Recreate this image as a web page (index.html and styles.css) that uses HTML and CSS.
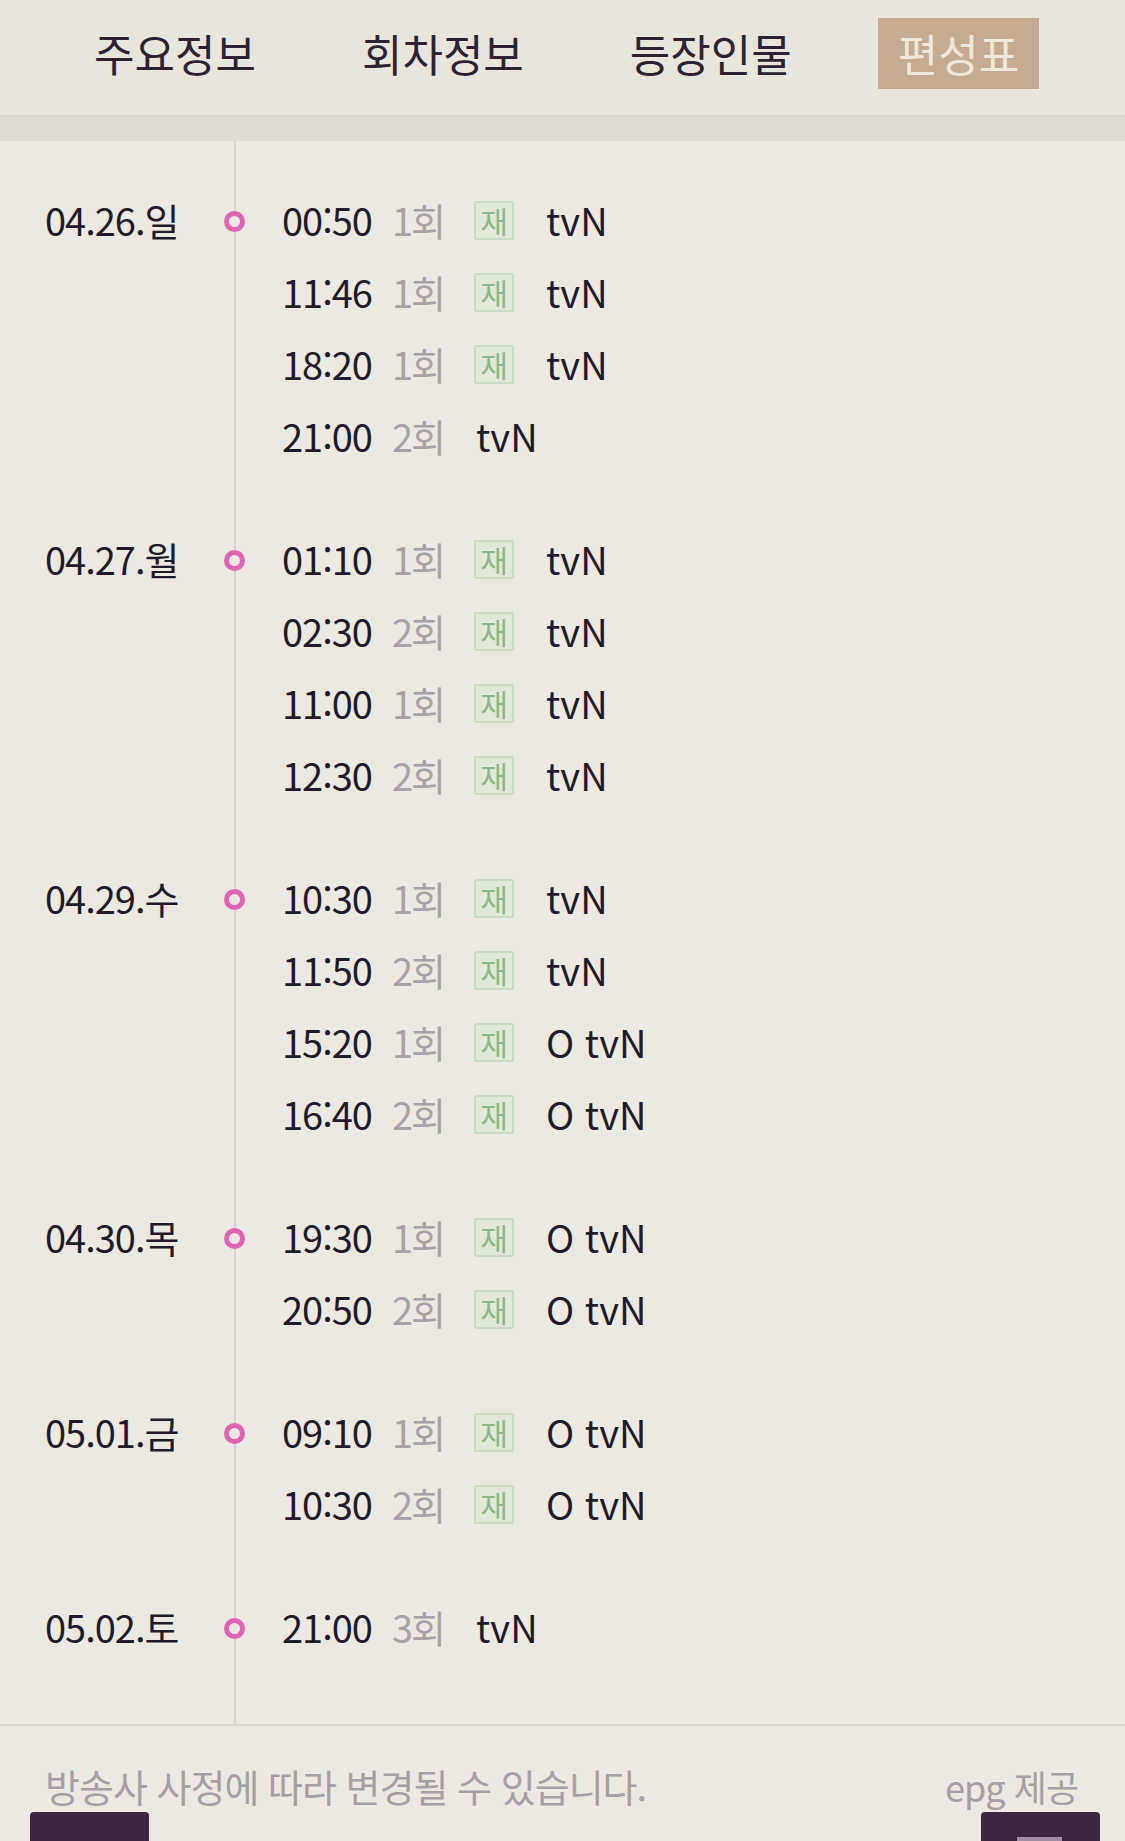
FILE: index.html
```html
<!DOCTYPE html>
<html lang="ko">
<head>
    <meta charset="UTF-8">
    <meta name="viewport" content="width=device-width, initial-scale=1.0">
    <title>편성표</title>
    <link rel="stylesheet" href="styles.css">
</head>
<body>
    <!-- Top tabs -->
    <nav class="tabs">
        <a class="tab">주요정보</a>
        <a class="tab">회차정보</a>
        <a class="tab">등장인물</a>
        <a class="tab active">편성표</a>
    </nav>
    <div class="band"></div>

    <!-- Schedule list -->
    <div class="schedule">
        <div class="day">
            <div class="day-date"><span>04.26.일</span><i class="dot"></i></div>
            <div class="day-times">
                <div class="slot"><span class="time">00:50</span><span class="ep">1회</span><span class="re">재</span><span class="ch">tvN</span></div>
                <div class="slot"><span class="time">11:46</span><span class="ep">1회</span><span class="re">재</span><span class="ch">tvN</span></div>
                <div class="slot"><span class="time">18:20</span><span class="ep">1회</span><span class="re">재</span><span class="ch">tvN</span></div>
                <div class="slot"><span class="time">21:00</span><span class="ep">2회</span><span class="ch">tvN</span></div>
            </div>
        </div>
        <div class="day">
            <div class="day-date"><span>04.27.월</span><i class="dot"></i></div>
            <div class="day-times">
                <div class="slot"><span class="time">01:10</span><span class="ep">1회</span><span class="re">재</span><span class="ch">tvN</span></div>
                <div class="slot"><span class="time">02:30</span><span class="ep">2회</span><span class="re">재</span><span class="ch">tvN</span></div>
                <div class="slot"><span class="time">11:00</span><span class="ep">1회</span><span class="re">재</span><span class="ch">tvN</span></div>
                <div class="slot"><span class="time">12:30</span><span class="ep">2회</span><span class="re">재</span><span class="ch">tvN</span></div>
            </div>
        </div>
        <div class="day">
            <div class="day-date"><span>04.29.수</span><i class="dot"></i></div>
            <div class="day-times">
                <div class="slot"><span class="time">10:30</span><span class="ep">1회</span><span class="re">재</span><span class="ch">tvN</span></div>
                <div class="slot"><span class="time">11:50</span><span class="ep">2회</span><span class="re">재</span><span class="ch">tvN</span></div>
                <div class="slot"><span class="time">15:20</span><span class="ep">1회</span><span class="re">재</span><span class="ch">O tvN</span></div>
                <div class="slot"><span class="time">16:40</span><span class="ep">2회</span><span class="re">재</span><span class="ch">O tvN</span></div>
            </div>
        </div>
        <div class="day">
            <div class="day-date"><span>04.30.목</span><i class="dot"></i></div>
            <div class="day-times">
                <div class="slot"><span class="time">19:30</span><span class="ep">1회</span><span class="re">재</span><span class="ch">O tvN</span></div>
                <div class="slot"><span class="time">20:50</span><span class="ep">2회</span><span class="re">재</span><span class="ch">O tvN</span></div>
            </div>
        </div>
        <div class="day">
            <div class="day-date"><span>05.01.금</span><i class="dot"></i></div>
            <div class="day-times">
                <div class="slot"><span class="time">09:10</span><span class="ep">1회</span><span class="re">재</span><span class="ch">O tvN</span></div>
                <div class="slot"><span class="time">10:30</span><span class="ep">2회</span><span class="re">재</span><span class="ch">O tvN</span></div>
            </div>
        </div>
        <div class="day">
            <div class="day-date"><span>05.02.토</span><i class="dot"></i></div>
            <div class="day-times">
                <div class="slot"><span class="time">21:00</span><span class="ep">3회</span><span class="ch">tvN</span></div>
            </div>
        </div>
    </div>

    <!-- Footer note -->
    <div class="note">
        <span>방송사 사정에 따라 변경될 수 있습니다.</span>
        <span class="epg">epg 제공</span>
    </div>
    <div class="bottom-bar">
        <button class="dark-btn"></button>
        <button class="dark-btn"><i class="btn-mark"></i></button>
    </div>
</body>
</html>
```

FILE: styles.css
```css
body {
    margin: 0;
    width: 1125px;
    height: 1841px;
    overflow: hidden;
    background-color: #ebe9e1; /* warm paper */
    color: #221a2a;
    font-family: "Noto Sans CJK KR", "Noto Sans", sans-serif;
}
.tabs {
    display: flex;
    gap: 66px;
    height: 117px;
    box-sizing: border-box;
    padding: 18px 0 0 74px;
    background-color: #e8e5dd;
    border-bottom: 2px solid #dbd7cf;
}
.tab {
    height: 71px;
    line-height: 71px;
    padding: 0 20px;
    font-size: 44px;
    color: #2e2232;
}
.tab.active {
    background-color: #c5ab91; /* tan box */
    color: #efe7da;
}
.band {
    height: 24px;
    background-color: #dfdcd6;
}
.schedule {
    padding: 42px 0 62px;
    /* the timeline rule */
    background: linear-gradient(#d9d5ce, #d9d5ce) no-repeat 234px 0 / 2px 100%;
}
.day {
    display: flex;
    margin-bottom: 51px;
}
.day:last-child {
    margin-bottom: 0;
}
.day-date {
    display: flex;
    align-items: center;
    width: 235px;
    height: 72px;
    box-sizing: border-box;
    padding-left: 45px;
    font-size: 38px;
    letter-spacing: -1px;
}
.dot {
    width: 11px;
    height: 11px;
    margin: 4px -10px 0 auto;
    border: 5px solid #e064b4; /* pink ring */
    border-radius: 50%;
    background-color: #ebe9e1;
}
.day-times {
    padding-left: 47px;
}
.slot {
    display: flex;
    align-items: center;
    height: 72px;
    font-size: 38px;
}
.time {
    letter-spacing: -1px;
}
.ep {
    margin-left: 20px;
    color: #a8a2a8;
    letter-spacing: -2px;
}
.re {
    display: inline-block;
    width: 36px;
    height: 35px;
    line-height: 34px;
    margin: 2px 0 0 30px;
    text-align: center;
    font-size: 30px;
    color: #8cb888;
    background-color: #e0e8d8;
    border: 2px solid #c9dcc2;
    border-radius: 2px;
}
.ch {
    margin-left: 32px;
}
.note {
    display: flex;
    justify-content: space-between;
    padding: 40px 47px 0 45px;
    line-height: 40px;
    border-top: 2px solid #dcd8d0;
    font-size: 38px;
    letter-spacing: -1px;
    color: #a79ea5;
}
.epg {
    font-size: 36px;
}
.bottom-bar {
    display: flex;
    justify-content: space-between;
    padding: 6px 25px 0 30px;
}
.dark-btn {
    position: relative;
    width: 119px;
    height: 70px;
    border: none;
    border-radius: 4px;
    background-color: #3d2640;
}
.btn-mark {
    position: absolute;
    left: 36px;
    top: 25px;
    width: 45px;
    height: 4px;
    background-color: #a08ea3;
}
```
